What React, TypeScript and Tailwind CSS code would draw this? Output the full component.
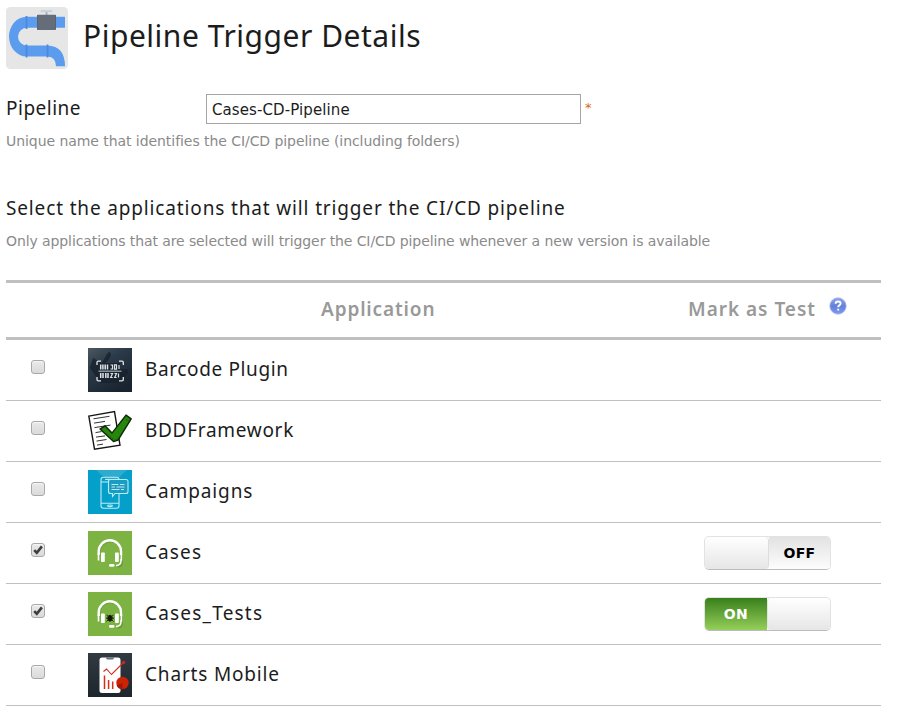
import type { ReactNode } from 'react';

const sans = "font-['Noto_Sans',sans-serif]";
const verdana = "font-['DejaVu_Sans',Verdana,sans-serif]";

function PipelineLogo() {
  return (
    <svg width="62" height="62" viewBox="0 0 62 62" className="block shrink-0">
      <rect width="62" height="62" rx="4.5" fill="#e6e6e6" />
      <path d="M59 9.800H20.500A17.500 19.800 0 0 0 20.500 49.400H41.500Q50 50 50 59.300H59Q59 39 41.500 38.400H20.500A8.500 8.800 0 0 1 20.500 20.800H59Z" fill="#5c9cee" />
      <path d="M20.500 9v13M20.500 37.500v13M41.500 37.500v13" stroke="#4a8add" strokeWidth="1.800" />
      <rect x="34.500" y="3" width="12" height="2.200" rx="1" fill="#ccd1d9" />
      <rect x="39.500" y="5" width="2" height="3" fill="#aab2bd" />
      <rect x="31" y="7.700" width="19" height="15.300" rx="1" fill="#656d78" />
      <path d="M31.500 8.200v14.300M49.500 8.200v14.300" stroke="#5a626d" />
    </svg>
  );
}

function BarcodeIcon() {
  return (
    <svg width="44" height="44" viewBox="0 0 44 44" className="block">
      <defs>
        <linearGradient id="night" x1="0" y1="0" x2=".6" y2="1">
          <stop offset="0" stopColor="#4d5960" />
          <stop offset=".4" stopColor="#2b3a49" />
          <stop offset="1" stopColor="#1a2430" />
        </linearGradient>
      </defs>
      <rect width="44" height="44" fill="url(#night)" />
      <path d="M5 10L14 15 19 6q3-4 4 0 0 3-5 9h14v6h7q3 3 0 6l-6 3 2 5H12L2 20Z" fill="#18222d" opacity=".8" />
      <path d="M9 17v-2.500q0-1.300 1.300-1.300H13M31 13.200h3q1.300 0 1.300 1.300V17M9 29v2.500q0 1.300 1.300 1.300H13M31 32.800h3q1.300 0 1.300-1.300V29" fill="none" stroke="#e4e8ea" strokeWidth="1.300" />
      <path d="M12.700 16.500v5M14.900 16.500v5M17.200 16.500v5M19.500 16.500v5M12.700 25v5M15 25v5M17.800 25v5M20 25v5" stroke="#dfe4e7" strokeWidth="1.500" />
      <path d="M22.500 17h2v4h-2M26.500 16.800h2v4.400h-2zM31 17v4M22.500 25.500h2l-1.800 4h2M26.500 25.500h2l-1.800 4h2M30.500 25.500v4" fill="none" stroke="#dce2e5" strokeWidth="1.200" />
      <path d="M10.500 23.200h23" stroke="#9aa8ae" strokeWidth="1.300" />
    </svg>
  );
}

function DocumentIcon() {
  return (
    <svg width="44" height="44" viewBox="0 0 44 44" className="block">
      <g transform="translate(0 .6)">
        <path d="M.8 6.500L26.500 2 32 35.500 6.500 39.500Z" fill="#fff" stroke="#151515" strokeWidth="1.400" />
        <path d="M5.500 9.200l16-2.500M6 13.500l11-1.700M6.500 18l16-2.500M7.500 23l6-1M8 27.500l9-1.200M8.500 31.500l10-1.600M9 35.500l6-1" stroke="#333" strokeWidth="1" />
        <path d="M12 19.500L17 16.200 24 23.500 38 5.500 43.200 9.300 30 30.500 25.500 32Z" fill="#27860c" stroke="#0b2905" strokeWidth="1.400" strokeLinejoin="round" />
        <path d="M22 27l5 4 3-3M38 10l3 1" fill="none" stroke="#175909" strokeDasharray="1.500 1" />
      </g>
    </svg>
  );
}

function CampaignIcon() {
  return (
    <svg width="44" height="44" viewBox="0 0 44 44" className="block">
      <rect width="44" height="44" fill="#05a0c9" />
      <path d="M8 0h31L24 14Z" fill="#2daccf" />
      <g fill="none" stroke="#bdebf5" strokeWidth="1.100">
        <rect x="13" y="7.300" width="18" height="31" rx="2.500" />
        <path d="M13 12h9M13 33.300h18M17 9.500h5" />
        <ellipse cx="22" cy="35.800" rx="2.500" ry=".8" />
        <path d="M22.500 9.500H38q2 0 2 2v10q0 2-2 2H27l-2.500 3v-3h-2q-2 0-2-2v-10q0-2 2-2Z" fill="#1a9dc1" />
        <path d="M23.500 14.500h7M32 14.500h4.500M23.500 17h3.500M28.500 17h8M23.500 19.500h8M33 19.500h3" />
      </g>
    </svg>
  );
}

function HeadsetIcon({ bug = false }: { bug?: boolean }) {
  return (
    <svg width="44" height="44" viewBox="0 0 44 44" className="block">
      <rect width="44" height="44" fill="#7cb342" />
      <g transform="translate(.7 1)" fill="none" stroke="#5d8b30" opacity=".6">
        <path d="M10.700 24v-3.500a11.200 11.200 0 0 1 22.400 0V31q0 3.500-4 3.500" strokeWidth="2" />
      </g>
      <path d="M10.700 24v-3.500a11.200 11.200 0 0 1 22.400 0V24" fill="none" stroke="#fff" strokeWidth="2.400" />
      <path d="M33 28v2q0 4.200-5 4.500" fill="none" stroke="#fff" strokeWidth="1.500" />
      <rect x="13" y="21.500" width="3.800" height="9.500" rx=".8" fill="#fff" />
      <rect x="27" y="21.500" width="3.800" height="9.500" rx=".8" fill="#fff" />
      <path d="M10.500 22.500v7M33.400 22.500v7" stroke="#fff" strokeWidth="1.600" />
      <rect x="21" y="33" width="5.500" height="2.800" rx="1.400" fill="#fff" />
      {bug && (
        <g stroke="#182108" strokeWidth=".9" fill="#111">
          <ellipse cx="22" cy="26.200" rx="2.200" ry="3" />
          <path d="M18.500 23l2 1.500M25.500 23l-2 1.500M18 26.200h8M18.500 29.500l2-2M25.500 29.500l-2-2" fill="none" />
        </g>
      )}
    </svg>
  );
}

function ChartIcon() {
  return (
    <svg width="44" height="44" viewBox="0 0 44 44" className="block">
      <defs>
        <linearGradient id="slate" x1="0" y1="0" x2="0" y2="1">
          <stop offset="0" stopColor="#303a40" />
          <stop offset="1" stopColor="#1c262c" />
        </linearGradient>
      </defs>
      <rect width="44" height="44" fill="url(#slate)" />
      <rect x="11.500" y="4.500" width="21" height="35.500" rx="2.500" fill="#fff" />
      <path d="M18 4.500h8q0 2-1.500 2h-5q-1.500 0-1.500-2Z" fill="#617078" />
      <path d="M15.500 18.500l3-2.500 5 5.500L35.500 9.500" fill="none" stroke="#d32c1d" strokeWidth="1.100" />
      <circle cx="35.500" cy="9.500" r="1.800" fill="#cb2527" />
      <path d="M16.500 36V22.500M20.600 36v-9M24.700 36v-7.500" stroke="#d72e16" strokeWidth="1.500" />
      <circle cx="34.500" cy="30" r="6.200" fill="#ce2205" />
      <path d="M34.500 30l-5.800 2.200a6.200 6.200 0 0 0 5.800 4Z" fill="#a51704" />
    </svg>
  );
}

function Checkbox({ checked }: { checked: boolean }) {
  return (
    <span className="block size-[14px] rounded-[3px] border border-[#a8a8a8] bg-linear-to-b from-[#e9e9e9] to-[#dadada] shadow-[inset_0_1px_1px_#f7f7f7]">
      {checked && (
        <svg width="12" height="12" viewBox="0 0 12 12" className="block">
          <path d="M2.200 6.100L4.800 8.700 9.900 2.400" fill="none" stroke="#3d3d3d" strokeWidth="2.600" />
        </svg>
      )}
    </span>
  );
}

function Toggle({ on }: { on: boolean }) {
  return (
    <div className={`flex h-[34px] w-[127px] overflow-hidden rounded-[5px] border border-[#e2e2e2] border-b-[#bcbcbc] text-[14px] font-bold leading-[32px] ${verdana}`}>
      {on ? (
        <>
          <div className="w-[62px] bg-linear-to-b from-[#38801b] to-[#94cf58] text-center text-white"><span className="tracking-[0.4px]">ON</span></div>
          <div className="flex-1 rounded-[4px] border-l border-[#e2e2e2] bg-linear-to-b from-white to-[#e6e6e6]" />
        </>
      ) : (
        <>
          <div className="w-[64px] rounded-[4px] border-r border-[#dddddd] bg-linear-to-b from-white to-[#e6e6e6]" />
          <div className="flex-1 bg-linear-to-b from-[#e2e2e2] to-[#fdfdfd] text-center text-black"><span className="tracking-[0.3px]">OFF</span></div>
        </>
      )}
    </div>
  );
}

function HelpIcon() {
  return (
    <svg width="18" height="18" viewBox="0 0 18 18" className="block">
      <defs>
        <linearGradient id="help" x1="0" y1="0" x2="0" y2="1">
          <stop offset="0" stopColor="#8fa5e9" />
          <stop offset=".5" stopColor="#6480d8" />
          <stop offset="1" stopColor="#7c9bf4" />
        </linearGradient>
      </defs>
      <circle cx="9" cy="9" r="8.200" fill="url(#help)" stroke="#a9b9ed" strokeWidth=".8" />
      <path d="M6.600 6.800q0-2.300 2.500-2.300t2.500 2q0 1.200-1.300 1.900-1.100.6-1.100 1.800M9.200 11.700v1.900" fill="none" stroke="#fff" strokeWidth="1.900" />
    </svg>
  );
}

type App = { name: string; icon: ReactNode; track: string; checked?: boolean; toggle?: boolean };

const apps: App[] = [
  { name: 'Barcode Plugin', icon: <BarcodeIcon />, track: 'tracking-[0.62px]' },
  { name: 'BDDFramework', icon: <DocumentIcon />, track: 'tracking-[0.7px]' },
  { name: 'Campaigns', icon: <CampaignIcon />, track: 'tracking-[0.9px]' },
  { name: 'Cases', icon: <HeadsetIcon />, track: 'tracking-[1.1px]', checked: true, toggle: false },
  { name: 'Cases_Tests', icon: <HeadsetIcon bug />, track: 'tracking-[1.2px]', checked: true, toggle: true },
  { name: 'Charts Mobile', icon: <ChartIcon />, track: 'tracking-[0.83px]' },
];

export default function PipelineTrigger() {
  return (
    <main className={`h-[713px] w-[901px] overflow-hidden bg-white pl-[6px] pt-[7px] text-[#1c1c1c] ${sans}`}>
      <header className="flex h-[62px]">
        <PipelineLogo />
        <h1 className="ml-[15px] whitespace-nowrap text-[30px] leading-[58px] tracking-[0.52px]">Pipeline Trigger Details</h1>
      </header>

      <div className="mt-[25px] flex h-[30px]">
        <label htmlFor="pipeline" className="w-[200px] text-[19px] leading-[28px] tracking-[0.5px]">Pipeline</label>
        <input id="pipeline" defaultValue="Cases-CD-Pipeline" className={`h-[30px] w-[375px] border border-[#a5a5a5] bg-white px-[5px] pt-[2px] text-[15px] tracking-[0.1px] outline-none ${verdana}`} />
        <span className={`ml-[4px] text-[13px] leading-[27px] text-[#dc6414] ${verdana}`}>*</span>
      </div>
      <p className="mt-[7px] h-[20px] whitespace-nowrap text-[14px] leading-[20px] tracking-[-0.06px] text-[#8a8a8a]">
        <span className={verdana}>Unique name that identifies the CI/CD pipeline (including folders)</span>
      </p>

      <h2 className="mt-[43px] h-[28px] whitespace-nowrap text-[19px] leading-[28px] tracking-[0.85px]">Select the applications that will trigger the CI/CD pipeline</h2>
      <p className="mt-[9px] h-[20px] whitespace-nowrap text-[14px] leading-[20px] tracking-[-0.095px] text-[#8a8a8a]">
        <span className={verdana}>Only applications that are selected will trigger the CI/CD pipeline whenever a new version is available</span>
      </p>

      <section className="mt-[29px] w-[875px]">
        <div className="flex h-[60px] items-center border-y-[3px] border-[#c0c0c0] pb-[2px] text-[19px] font-semibold text-[#999]">
          <div className="ml-[315px] w-[367px] leading-[28px] tracking-[0.86px]">Application</div>
          <div className="w-[141px] whitespace-nowrap leading-[28px] tracking-[0.98px]">Mark as Test</div>
          <div className="-mt-[7px]"><HelpIcon /></div>
        </div>
        {apps.map((app) => (
          <div key={app.name} className="flex h-[61px] border-b border-[#c0c0c0] pt-[8px]">
            <div className="ml-[25px] mt-[12px] w-[57px]"><Checkbox checked={!!app.checked} /></div>
            {app.icon}
            <div className={`ml-[13px] w-[559px] whitespace-nowrap text-[19px] leading-[42px] ${app.track}`}>{app.name}</div>
            {app.toggle !== undefined && <div className="pt-[5px]"><Toggle on={app.toggle} /></div>}
          </div>
        ))}
      </section>
    </main>
  );
}
